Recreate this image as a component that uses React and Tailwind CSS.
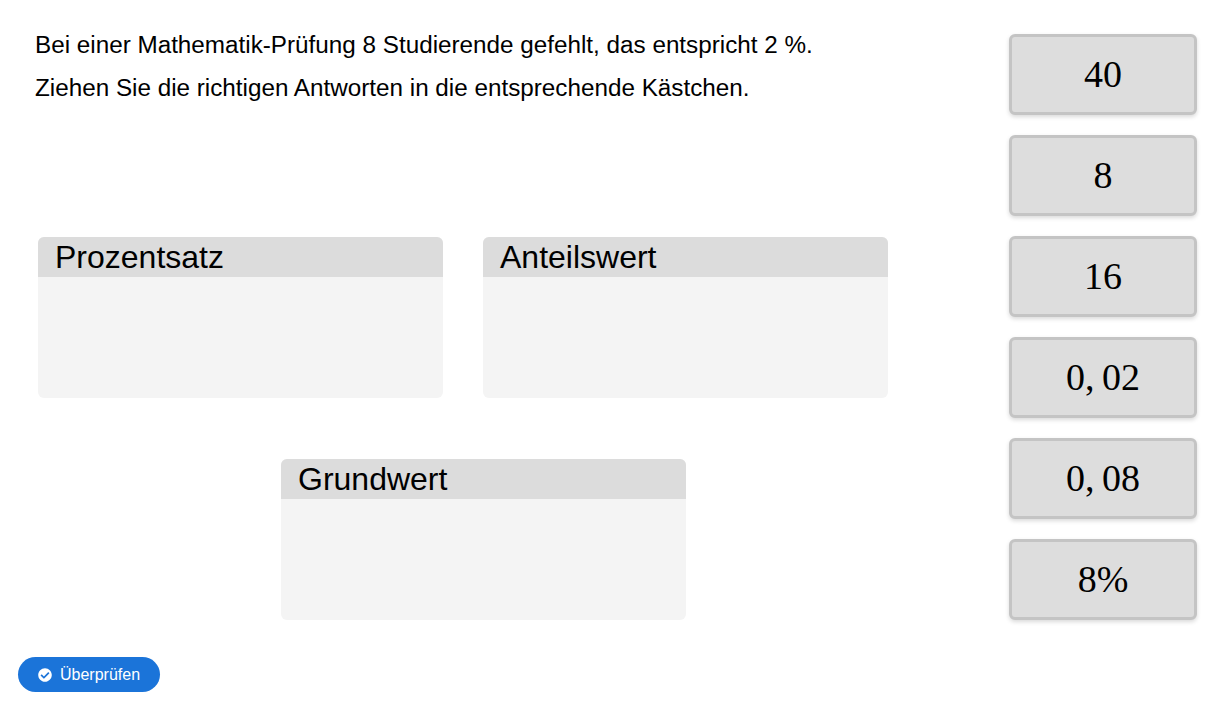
import { FaCheckCircle } from "react-icons/fa";

const tiles = ["40", "8", "16", "0,\u200902", "0,\u200908", "8%"];

const DropBox = ({ title }) => (
  <div className="h-[161px] w-[405px] overflow-hidden rounded-md bg-[#f4f4f4]">
    <div className="h-[40px] bg-[#dcdcdc] pl-[17px] text-[32px] leading-[40px] text-black">{title}</div>
  </div>
);

export default function App() {
  return (
    <div className="flex h-[719px] w-[1228px] bg-white font-['Liberation_Sans',Arial,sans-serif] text-black">
      <div className="flex flex-1 flex-col">
        <div className="pl-[35px] pt-[30px] text-[24.25px] leading-[30px]">
          <p>Bei einer Mathematik-Prüfung 8 Studierende gefehlt, das entspricht 2 %.</p>
          <p className="mt-[13px]">Ziehen Sie die richtigen Antworten in die entsprechende Kästchen.</p>
        </div>

        <div className="mt-[134px] flex gap-[40px] pl-[38px]">
          <DropBox title="Prozentsatz" />
          <DropBox title="Anteilswert" />
        </div>
        <div className="mt-[61px] pl-[281px]">
          <DropBox title="Grundwert" />
        </div>

        <div className="mt-[37px] pl-[18px]">
          <button className="flex h-[35px] items-center gap-[8px] rounded-full bg-[#1b74d9] pl-[20px] pr-[20px] text-[16px] text-white">
            <FaCheckCircle className="text-[14px]" />
            <span>Überprüfen</span>
          </button>
        </div>
      </div>

      <div className="mr-[31px] flex w-[188px] flex-col gap-[20px] pt-[34px]">
        {tiles.map((t) => (
          <div
            key={t}
            className="flex h-[81px] items-center justify-center rounded-[6px] border-[3px] border-[#c4c4c4] bg-[#dddddd] font-['Liberation_Serif','Times_New_Roman',serif] text-[38px] shadow-[0_2px_4px_rgba(0,0,0,0.15)]"
          >
            {t}
          </div>
        ))}
      </div>
    </div>
  );
}
